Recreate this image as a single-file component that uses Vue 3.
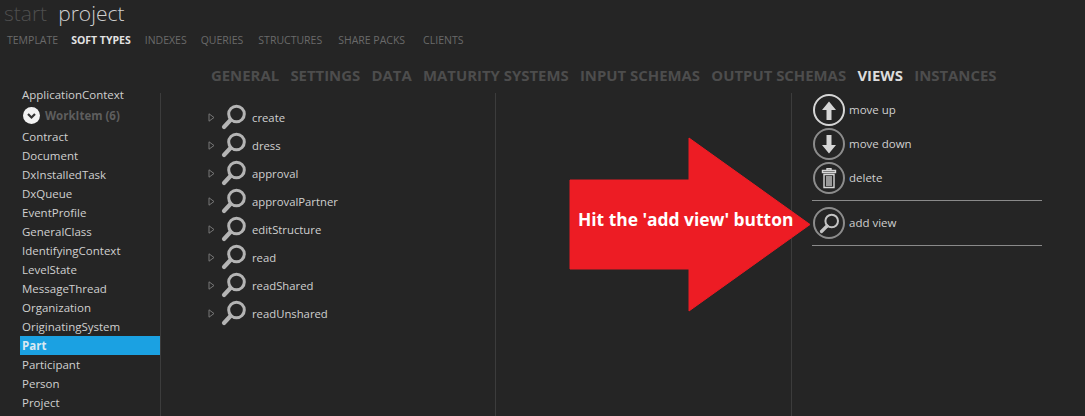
<template>
  <div class="page">
    <header class="top">
      <div class="crumbs">
        <span class="start">start</span>
        <span class="project">project</span>
      </div>
      <nav class="nav">
        <a v-for="n in navItems" :key="n" :class="{ on: n === 'SOFT TYPES' }">{{ n }}</a>
      </nav>
    </header>

    <nav class="tabs">
      <a v-for="t in tabs" :key="t" :class="{ on: t === 'VIEWS' }">{{ t }}</a>
    </nav>

    <div class="body">
      <ul class="types">
        <li>ApplicationContext</li>
        <li class="group">
          <svg class="chev" width="17" height="17" viewBox="0 0 17 17">
            <circle cx="8.5" cy="8.5" r="8.5" fill="#f2f2f2" />
            <path d="M5 7l3.5 3.5L12 7" fill="none" stroke="#333" stroke-width="2.2" />
          </svg>
          WorkItem (6)
        </li>
        <li v-for="t in types" :key="t" :class="{ sel: t === 'Part' }">{{ t }}</li>
      </ul>

      <div class="views">
        <div v-for="v in views" :key="v" class="view">
          <svg class="caret" width="7" height="9" viewBox="0 0 7 9">
            <path d="M1 .8l5 3.7-5 3.7z" fill="none" stroke="#777" stroke-width="1" />
          </svg>
          <svg class="lens" width="26" height="26" viewBox="0 0 26 26">
            <circle cx="15.500" cy="10" r="7.800" fill="none" stroke="#b4b4b4" stroke-width="3" />
            <path d="M9.500 16L3 23" stroke="#b4b4b4" stroke-width="4.200" stroke-linecap="round" />
          </svg>
          <span>{{ v }}</span>
        </div>
      </div>

      <div class="blank"></div>

      <div class="actions">
        <div class="act">
          <span class="round bright">
            <svg width="24" height="24" viewBox="0 0 24 24">
              <path d="M12 3.500L19 12H14.500V22H9.500V12H5z" fill="#d6d6d6" />
            </svg>
          </span>
          <span class="label">move up</span>
        </div>
        <div class="act">
          <span class="round">
            <svg width="24" height="24" viewBox="0 0 24 24">
              <path d="M12 21.500L19 13H14.500V3H9.500V13H5z" fill="#d6d6d6" />
            </svg>
          </span>
          <span class="label">move down</span>
        </div>
        <div class="act">
          <span class="round">
            <svg width="24" height="24" viewBox="0 0 24 24">
              <path d="M10 4V2.800h4V4M5.500 4.500h13v2h-13zM7 8.500h10V21.500H7z" fill="none" stroke="#d6d6d6" stroke-width="1.400" />
              <path d="M10 10v10M12 10v10M14 10v10" stroke="#d6d6d6" stroke-width="1.300" />
            </svg>
          </span>
          <span class="label">delete</span>
        </div>
        <div class="act add">
          <span class="round">
            <svg width="24" height="24" viewBox="0 0 24 24">
              <circle cx="14.700" cy="10" r="6.300" fill="none" stroke="#c4c4c4" stroke-width="2" />
              <path d="M10 15L4.500 20.500" stroke="#c4c4c4" stroke-width="3.200" stroke-linecap="round" />
            </svg>
          </span>
          <span class="label">add view</span>
        </div>
      </div>
    </div>

    <div class="callout">
      <svg width="242" height="176" viewBox="0 0 242 176">
        <path d="M1 43H120V1L241 87.500 120 174V132H1z" fill="#ed1c24" stroke="#ed1c24" stroke-width="1" stroke-linejoin="round" />
      </svg>
      <span>Hit the 'add view' button</span>
    </div>
  </div>
</template>

<script setup>
const navItems = ['TEMPLATE', 'SOFT TYPES', 'INDEXES', 'QUERIES', 'STRUCTURES', 'SHARE PACKS', 'CLIENTS']
const tabs = ['GENERAL', 'SETTINGS', 'DATA', 'MATURITY SYSTEMS', 'INPUT SCHEMAS', 'OUTPUT SCHEMAS', 'VIEWS', 'INSTANCES']
const types = [
  'Contract', 'Document', 'DxInstalledTask', 'DxQueue', 'EventProfile', 'GeneralClass',
  'IdentifyingContext', 'LevelState', 'MessageThread', 'Organization', 'OriginatingSystem',
  'Part', 'Participant', 'Person', 'Project',
]
const views = ['create', 'dress', 'approval', 'approvalPartner', 'editStructure', 'read', 'readShared', 'readUnshared']
</script>

<style>
html,
body {
  margin: 0;
  background: #252525;
}
</style>

<style scoped>
.page {
  position: relative;
  width: 1085px;
  height: 416px;
  overflow: hidden;
  background: #252525;
  color: #d0d0d0;
  font-family: "Open Sans", "Noto Sans", sans-serif;
  font-size: 11.5px;
}

.crumbs {
  display: flex;
  gap: 11px;
  height: 30px;
  padding-left: 4px;
  font-size: 21px;
  font-weight: 300;
  line-height: 27px;
}

.start {
  color: #4f4f4f;
}

.project {
  color: #cfcfcf;
}

.nav {
  display: flex;
  height: 20px;
  padding-left: 7px;
  font-size: 10.5px;
  line-height: 20px;
  color: #6a6a6a;
}

.nav a {
  margin-right: 14px;
}

.nav a:nth-child(1) {
  margin-right: 13px;
}

.nav a:nth-child(4) {
  margin-right: 15px;
}

.nav a:nth-child(5) {
  margin-right: 16px;
}

.nav a:nth-child(6) {
  margin-right: 18px;
}

.nav a.on {
  color: #e2e2e2;
  font-weight: 700;
}

.tabs {
  display: flex;
  gap: 11.3px;
  height: 35px;
  padding: 16px 0 0 211px;
  box-sizing: border-box;
  font-size: 14.9px;
  font-weight: 700;
  line-height: 19px;
  color: #4d4d4d;
}

.tabs a.on {
  color: #dcdcdc;
}

.body {
  display: flex;
  height: 331px;
}

.types {
  width: 140px;
  margin: 0 0 0 20px;
  padding: 0;
  list-style: none;
  flex: none;
  position: relative;
}

.types::after {
  content: "";
  position: absolute;
  top: 8px;
  bottom: 0;
  right: -1px;
  width: 1px;
  background: #3c3c3c;
}

.types li {
  height: 19px;
  padding-left: 2px;
  line-height: 19px;
  white-space: nowrap;
}

.types li.group {
  display: flex;
  align-items: center;
  gap: 5px;
  height: 23px;
  padding-left: 3px;
  font-weight: 700;
  color: #5e5e5e;
}

.types li.sel {
  background: #1ba1e2;
  color: #d9e9f2;
  font-weight: 700;
}

.views {
  width: 335px;
  flex: none;
  margin-left: 1px;
  padding: 10px 0 0 47px;
  box-sizing: border-box;
  border-right: 1px solid #3c3c3c;
  margin-top: 8px;
  font-size: 11.3px;
}

.view {
  display: flex;
  align-items: center;
  height: 28px;
}

.caret {
  margin-right: 6px;
}

.lens {
  margin-right: 5px;
}

.blank {
  width: 296px;
  flex: none;
  box-sizing: border-box;
  margin-top: 8px;
  border-right: 1px solid #3c3c3c;
}

.actions {
  width: 230px;
  margin-left: 20px;
  padding-top: 8px;
}

.act {
  display: flex;
  align-items: center;
  gap: 4px;
  height: 34px;
}

.label {
  margin-bottom: 2px;
}

.act.add {
  height: 44px;
  margin-top: 5px;
  border-top: 1px solid #8a8a8a;
  border-bottom: 1px solid #8a8a8a;
}

.round {
  display: flex;
  align-items: center;
  justify-content: center;
  width: 28px;
  height: 28px;
  margin-left: 1px;
  border: 2px solid #8c8c8c;
  border-radius: 50%;
}

.round svg {
  flex: none;
}

.round.bright {
  border-color: #d6d6d6;
}

.callout {
  position: absolute;
  left: 569px;
  top: 137px;
  width: 242px;
  height: 176px;
}

.callout svg {
  display: block;
}

.callout span {
  position: absolute;
  left: 9px;
  top: 71px;
  color: #fff;
  font-size: 17.4px;
  font-weight: 700;
  line-height: 23px;
  white-space: nowrap;
}
</style>
